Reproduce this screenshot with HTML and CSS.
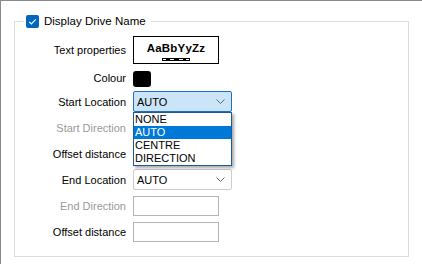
FILE: index.html
```html
<!DOCTYPE html>
<html lang="en">
<head>
  <meta charset="UTF-8" />
  <meta name="viewport" content="width=device-width, initial-scale=1" />
  <title>Drive Name Options</title>
  <link rel="stylesheet" href="styles.css">
</head>
<body>

<div class="window">
  <fieldset class="group">
    <legend class="group-title">
      <span class="check">
        <svg width="13" height="13" viewBox="0 0 13 13"><path d="M3.2 6.8 L5.4 9 L9.8 4.4" fill="none" stroke="#fff" stroke-width="1.2"/></svg>
      </span>
      Display Drive Name
    </legend>

    <div class="form">
      <label class="lbl">Text properties</label>
      <div class="font-preview">
        <span class="sample">AaBbYyZz</span>
        <svg class="sample-line" width="28" height="3" viewBox="0 0 28 3">
          <rect x="0" y="0" width="28" height="3" fill="#000"/>
          <rect x="8" y="1" width="4" height="1" fill="#fff"/>
          <rect x="17" y="1" width="4" height="1" fill="#fff"/>
          <rect x="1" y="1" width="3" height="1" fill="#fff"/>
          <rect x="24" y="1" width="3" height="1" fill="#fff"/>
        </svg>
      </div>

      <label class="lbl">Colour</label>
      <div class="swatch"></div>

      <label class="lbl">Start Location</label>
      <div class="combo-wrap">
        <div class="combo open">
          <span>AUTO</span>
          <svg class="chev" width="9" height="5" viewBox="0 0 9 5"><path d="M0.5 0.5 L4.5 4.5 L8.5 0.5" fill="none" stroke="#6a6a6a" stroke-width="1"/></svg>
        </div>
        <ul class="droplist">
          <li>NONE</li>
          <li class="selected">AUTO</li>
          <li>CENTRE</li>
          <li>DIRECTION</li>
        </ul>
      </div>

      <label class="lbl disabled">Start Direction</label>
      <div class="field"></div>

      <label class="lbl">Offset distance</label>
      <div class="field"></div>

      <label class="lbl">End Location</label>
      <div class="combo">
        <span>AUTO</span>
        <svg class="chev" width="9" height="5" viewBox="0 0 9 5"><path d="M0.5 0.5 L4.5 4.5 L8.5 0.5" fill="none" stroke="#6a6a6a" stroke-width="1"/></svg>
      </div>

      <label class="lbl disabled">End Direction</label>
      <div class="field"></div>

      <label class="lbl">Offset distance</label>
      <div class="field"></div>
    </div>
  </fieldset>
</div>

</body>
</html>
```

FILE: styles.css
```css
body {
  margin: 0;
  background: #fff;
  font-family: "Liberation Sans", Arial, sans-serif;
  font-size: 11px;
  color: #000;
}

.window {
  width: 421px;
  height: 263px;
  border-top: 1px solid #868a8e;
  border-left: 1px solid #868a8e;
  overflow: hidden;
}

.group {
  margin: 13px 0 0 13px;
  width: 395px;
  padding: 8px 0 14px 0;
  border: 1px solid #dcdcdc;
  box-sizing: border-box;
  min-width: 0;
}

.group-title {
  margin-left: 9px;
  padding: 0 5px 0 2px;
  height: 14px;
  line-height: 14px;
  display: flex;
  align-items: center;
  gap: 5px;
  font-size: 11.5px;
}

.check {
  width: 13px;
  height: 13px;
  background: #0067c0;
  border-radius: 2px;
  display: block;
  margin-top: 1px;
}

.check svg {
  display: block;
}

.form {
  display: grid;
  grid-template-columns: 111px 1fr;
  grid-template-rows: 28px 17px repeat(6, 21px);
  column-gap: 7px;
  row-gap: 5px;
}

.lbl {
  text-align: right;
  align-self: center;
  white-space: nowrap;
}

.lbl.disabled {
  color: #9a9a9a;
}

.font-preview {
  width: 86px;
  height: 28px;
  box-sizing: border-box;
  border: 1px solid #000;
  display: flex;
  flex-direction: column;
  align-items: center;
  padding-top: 4px;
}

.sample {
  font-weight: bold;
  font-size: 11.5px;
  line-height: 14px;
  letter-spacing: 0.2px;
}

.sample-line {
  display: block;
  margin-top: 3px;
}

.swatch {
  width: 18px;
  height: 16px;
  background: #000;
  border-radius: 3px;
  align-self: center;
  margin-top: 2px;
}

.combo-wrap {
  position: relative;
}

.combo {
  width: 99px;
  height: 21px;
  box-sizing: border-box;
  border: 1px solid #cccccc;
  border-radius: 2px;
  background: #fff;
  display: flex;
  align-items: center;
  justify-content: space-between;
  padding: 0 6px 0 3px;
}

.combo.open {
  background: #cce4f7;
  border-color: #1f6fc4;
}

.chev {
  display: block;
}

.droplist {
  position: absolute;
  top: 21px;
  left: 0;
  width: 99px;
  margin: 0;
  padding: 0;
  list-style: none;
  background: #fff;
  border: 1px solid #1d5a9c;
  box-sizing: border-box;
  box-shadow: 2px 2px 3px rgba(0, 0, 0, 0.35);
  z-index: 2;
}

.droplist li {
  height: 13px;
  line-height: 13px;
  padding-left: 1px;
  font-size: 11px;
}

.droplist li.selected {
  background: #0078d7;
  color: #fff;
}

.field {
  width: 86px;
  height: 20px;
  box-sizing: border-box;
  border: 1px solid #b4b4b4;
  background: #fff;
  align-self: center;
}
```
